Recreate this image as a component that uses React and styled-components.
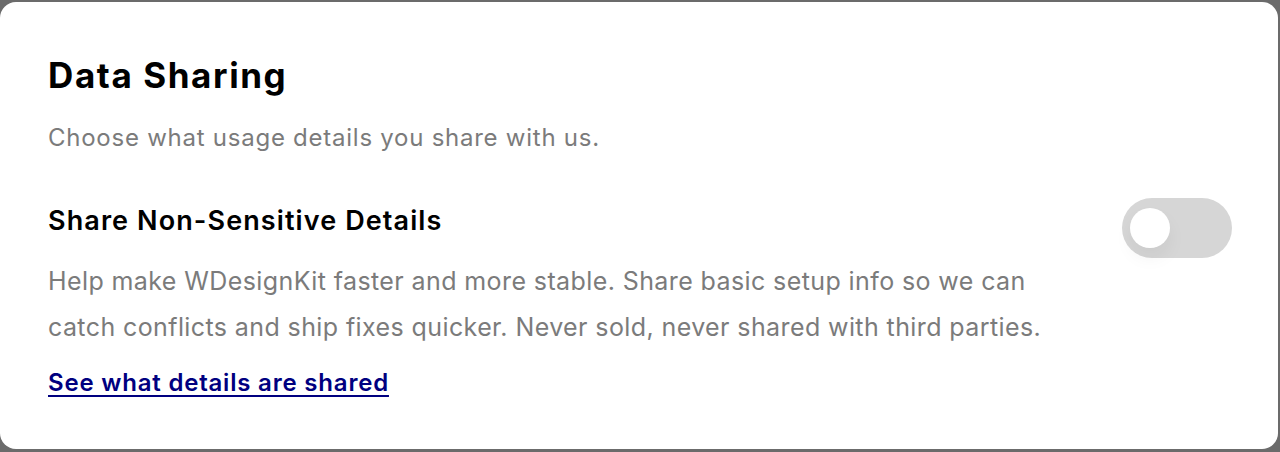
import React, { useState } from "react";
import styled, { createGlobalStyle } from "styled-components";

const GlobalStyle = createGlobalStyle`
  html, body {
    margin: 0;
    padding: 0;
    background: #6b6b6b;
  }
  body {
    font-family: "Inter", "Noto Sans", sans-serif;
  }
`;

const Frame = styled.div`
  padding: 2px 2px 3px 0;
`;

const Card = styled.section`
  background: #ffffff;
  border-radius: 16px;
  padding: 53px 46px 0 48px;
  box-sizing: border-box;
  height: 447px;
`;

const Title = styled.h1`
  margin: 0;
  font-size: 35px;
  line-height: 40px;
  font-weight: 700;
  letter-spacing: 1.6px;
  color: #000;
`;

const Lead = styled.p`
  margin: 27px 0 0;
  font-size: 24px;
  line-height: 32px;
  letter-spacing: 0.75px;
  color: #7b7b7b;
`;

const Option = styled.div`
  display: flex;
  justify-content: space-between;
  align-items: flex-start;
  margin-top: 51px;
`;

const OptionText = styled.div`
  display: flex;
  flex-direction: column;
  max-width: 1010px;
`;

const OptionTitle = styled.h2`
  margin: 0;
  font-size: 27px;
  line-height: 32px;
  font-weight: 600;
  letter-spacing: 1.1px;
  color: #000;
`;

const OptionDesc = styled.p`
  margin: 21px 0 0;
  font-size: 25px;
  line-height: 46px;
  letter-spacing: 0.4px;
  color: #7b7b7b;
`;

const DetailsLink = styled.a`
  margin-top: 17px;
  align-self: flex-start;
  font-size: 24px;
  line-height: 32px;
  font-weight: 600;
  letter-spacing: 0.8px;
  color: #000080;
  text-decoration: underline;
  text-underline-offset: 4px;
  text-decoration-thickness: 2px;
`;

const Switch = styled.button`
  position: relative;
  flex: none;
  width: 110px;
  height: 60px;
  margin-top: -7px;
  padding: 0;
  border: none;
  border-radius: 30px;
  background: ${(p) => (p.$on ? "#000080" : "#d6d6d6")};
  cursor: pointer;
`;

const Knob = styled.span`
  position: absolute;
  top: 10px;
  left: ${(p) => (p.$on ? "62px" : "8px")};
  width: 40px;
  height: 40px;
  border-radius: 50%;
  background: #fff;
  box-shadow: 0 10px 18px rgba(0, 0, 0, 0.05);
  transition: left 0.2s;
`;

export default function App() {
  const [on, setOn] = useState(false);
  return (
    <>
      <GlobalStyle />
      <Frame>
        <Card>
          <Title>Data Sharing</Title>
          <Lead>Choose what usage details you share with us.</Lead>
          <Option>
            <OptionText>
              <OptionTitle>Share Non-Sensitive Details</OptionTitle>
              <OptionDesc>
                Help make WDesignKit faster and more stable. Share basic setup
                info so we can catch conflicts and ship fixes quicker. Never
                sold, never shared with third parties.
              </OptionDesc>
              <DetailsLink href="#">See what details are shared</DetailsLink>
            </OptionText>
            <Switch $on={on} onClick={() => setOn(!on)} aria-label="Share non-sensitive details">
              <Knob $on={on} />
            </Switch>
          </Option>
        </Card>
      </Frame>
    </>
  );
}
